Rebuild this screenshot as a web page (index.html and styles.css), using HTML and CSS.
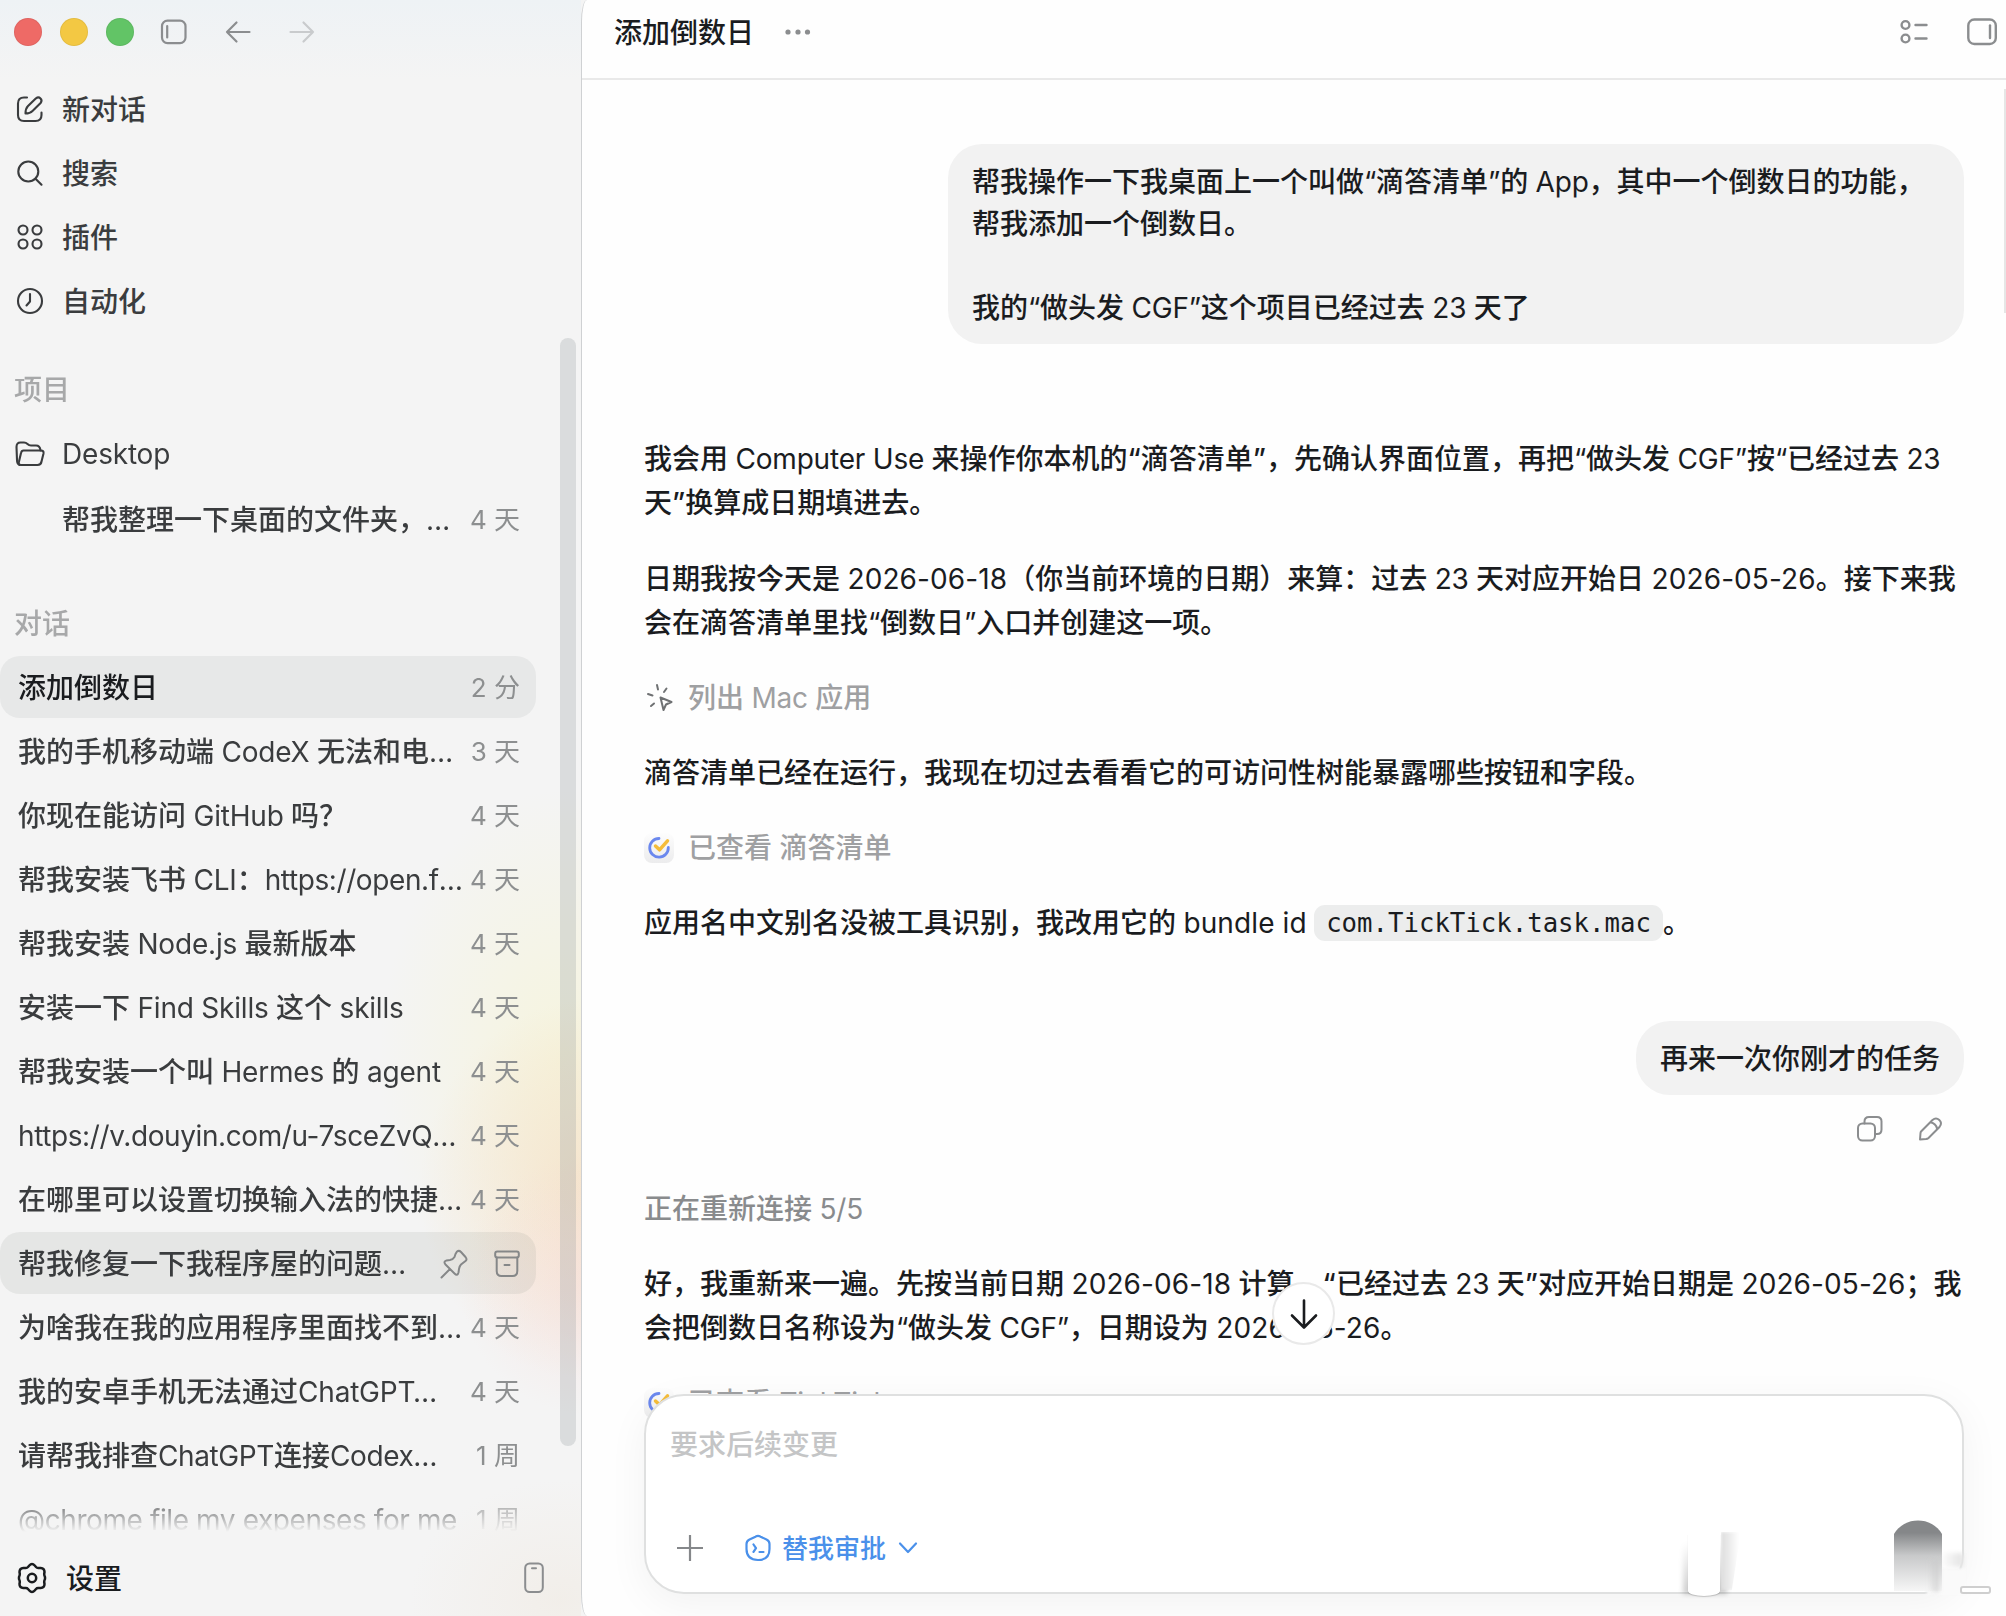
FILE: index.html
```html
<!DOCTYPE html>
<html lang="zh-CN">
<head>
<meta charset="utf-8">
<title>添加倒数日</title>
<link rel="stylesheet" href="styles.css">
</head>
<body>
<div class="app">
  <aside class="sidebar">
    <div class="titlebar">
      <span class="light red"></span><span class="light yellow"></span><span class="light green"></span>
      <svg class="tb-panel" width="28" height="28" viewBox="0 0 28 28"><rect x="2" y="2.6" width="23.5" height="22.5" rx="5.5"/><path d="M7.2 8v11.5"/></svg>
      <svg class="tb-back" width="26" height="26" viewBox="0 0 26 26"><path d="M24.5 13H2M11.500 3.500L2 13l9.500 9.500"/></svg>
      <svg class="tb-fwd" width="26" height="26" viewBox="0 0 26 26"><path d="M1.500 13H24M14.500 3.500L24 13l-9.500 9.500"/></svg>
    </div>
    <nav class="nav">
      <a class="nav-item"><svg width="28" height="28" viewBox="0 0 28 28"><path d="M11 2.500H8Q2 2.500 2 8.500V20Q2 26 8 26H19.500Q25.500 26 25.500 20V17.500"/><path d="M9.500 18.500Q9.500 13.500 12 11L20 3.300Q22.500 1.500 24.500 3.500T24.600 8L16.500 16Q14 18.500 9.500 18.500z"/></svg><span>新对话</span></a>
      <a class="nav-item"><svg width="28" height="28" viewBox="0 0 28 28"><circle cx="12.300" cy="12.500" r="10"/><path d="M19.500 19.700l6 6"/></svg><span>搜索</span></a>
      <a class="nav-item"><svg width="28" height="28" viewBox="0 0 28 28"><circle cx="7" cy="7" r="4.500"/><circle cx="21" cy="7" r="4.500"/><circle cx="7" cy="21" r="4.500"/><circle cx="21" cy="21" r="4.500"/></svg><span>插件</span></a>
      <a class="nav-item"><svg width="28" height="28" viewBox="0 0 28 28"><circle cx="14" cy="14" r="12"/><path d="M14 7v7.500l-3.500 4"/></svg><span>自动化</span></a>
    </nav>
    <div class="scroll">
      <h2 class="group">项目</h2>
      <a class="nav-item folder"><svg width="30" height="28" viewBox="0 0 30 28"><path d="M4.500 25Q2 24 2 20L1.500 7Q1.500 2.500 5.500 2.500H9Q11 2.500 12.500 4T16 5.500H21Q25 5.500 25.500 10.500"/><path d="M8.500 10.500H26Q29 10.500 28.500 13.500L26.500 21.500Q26 25 22.500 25H6Q3 25 4 21.500L6 13Q6.500 10.500 8.500 10.500z"/></svg><b>Desktop</b></a>
      <div class="row sub"><span class="name">帮我整理一下桌面的文件夹，<i>…</i></span><time>4 天</time></div>
      <h2 class="group second">对话</h2>
      <div class="row on"><span class="name">添加倒数日</span><time>2 分</time></div>
      <div class="row"><span class="name">我的手机移动端 <b>CodeX</b> 无法和电<i>…</i></span><time>3 天</time></div>
      <div class="row"><span class="name">你现在能访问 <b>GitHub</b> 吗？</span><time>4 天</time></div>
      <div class="row"><span class="name">帮我安装飞书 <b>CLI</b>：<b class="tight">https://open.f</b><i>…</i></span><time>4 天</time></div>
      <div class="row"><span class="name">帮我安装 <b>Node.js</b> 最新版本</span><time>4 天</time></div>
      <div class="row"><span class="name">安装一下 <b>Find Skills</b> 这个 <b>skills</b></span><time>4 天</time></div>
      <div class="row"><span class="name">帮我安装一个叫 <b>Hermes</b> 的 <b>agent</b></span><time>4 天</time></div>
      <div class="row"><span class="name"><b class="tight">https://v.douyin.com/u-7sceZvQ</b><i>…</i></span><time>4 天</time></div>
      <div class="row"><span class="name">在哪里可以设置切换输入法的快捷<i>…</i></span><time>4 天</time></div>
      <div class="row hover"><span class="name">帮我修复一下我程序屋的问题<i>…</i></span>
        <span class="row-tools">
          <svg width="28" height="30" viewBox="0 0 28 30"><path d="M10 20L1.500 28.500M17 2.500Q19 1 21 3L25.500 8Q27.500 10.500 25.500 12L21 15.500Q19.500 17 19 20L18.500 23.500Q17.500 27.500 14.500 24.500L5.500 15.500Q3 12.500 6.500 11.500L10 11Q13 10.500 14.500 8L15.500 5z"/></svg>
          <svg width="26" height="28" viewBox="0 0 26 28"><rect x="1.200" y="1.500" width="23.600" height="6" rx="2"/><path d="M2.700 7.500V21Q2.700 26 7.500 26H18.500Q23.300 26 23.300 21V7.500M10.500 15h5"/></svg>
        </span></div>
      <div class="row"><span class="name">为啥我在我的应用程序里面找不到<i>…</i></span><time>4 天</time></div>
      <div class="row"><span class="name">我的安卓手机无法通过<b>ChatGPT…</b></span><time>4 天</time></div>
      <div class="row"><span class="name">请帮我排查<b class="tight">ChatGPT</b>连接<b class="tight">Codex</b><i>…</i></span><time>1 周</time></div>
      <div class="row"><span class="name"><b class="tight">@chrome file my expenses for me</b></span><time>1 周</time></div>
    </div>
    <div class="settings">
      <svg width="30" height="32" viewBox="0 0 30 32"><path d="M12.300 3.500Q15 .5 17.700 3.500L19 5Q20 6.200 21.600 6L23.700 5.900Q27.500 6.200 27.500 10L27.200 12Q27.200 13.500 28 15V17Q27.200 18.500 27.200 20L27.500 22Q27.500 25.800 23.700 26.100L21.600 26Q20 25.800 19 27L17.700 28.500Q15 31.500 12.300 28.500L11 27Q10 25.800 8.400 26L6.300 26.100Q2.500 25.800 2.500 22L2.800 20Q2.800 18.500 2 17V15Q2.800 13.500 2.800 12L2.500 10Q2.500 6.200 6.300 5.900L8.400 6Q10 6.200 11 5z"/><circle cx="15" cy="16" r="4.200"/></svg>
      <span>设置</span>
      <svg class="phone" width="20" height="32" viewBox="0 0 20 32"><rect x="1.200" y="1.500" width="17.600" height="28.500" rx="4.500"/><path d="M8 6.300h4"/></svg>
    </div>
    <span class="thumb"></span>
  </aside>

  <main class="main">
    <header class="header">
      <h1>添加倒数日</h1>
      <svg class="more" width="26" height="8" viewBox="0 0 26 8"><circle cx="3" cy="4" r="2.600"/><circle cx="13" cy="4" r="2.600"/><circle cx="22.500" cy="4" r="2.600"/></svg>
      <svg class="list" width="28" height="26" viewBox="0 0 28 26"><circle cx="5.500" cy="6" r="3.900"/><circle cx="5.500" cy="19.500" r="3.900"/><path d="M15.500 6h11M15.500 19.500h11"/></svg>
      <svg class="pane" width="32" height="28" viewBox="0 0 32 28"><rect x="2.300" y="1.500" width="27.500" height="24.500" rx="6"/><path d="M24 7.500v12.500"/></svg>
    </header>
    <section class="thread">
      <div class="bubble first">帮我操作一下我桌面上一个叫做<i class="q">“</i>滴答清单<i class="q">”</i>的 <b>App</b>，其中一个倒数日的功能，<br>帮我添加一个倒数日。<br><br>我的<i class="q">“</i>做头发 <b>CGF</b><i class="q">”</i>这个项目已经过去 <b>23</b> 天了</div>
      <p class="intro">我会用 <b>Computer Use</b> 来操作你本机的“滴答清单”，先确认界面位置，再把<i class="q">“</i>做头发 <b>CGF</b><i class="q">”</i>按<i class="q">“</i>已经过去 <b>23</b><br>天”换算成日期填进去。</p>
      <p>日期我按今天是 <b class="num">2026-06-18</b>（你当前环境的日期）来算：过去 <b>23</b> 天对应开始日 <b class="num">2026-05-26</b>。接下来我<br>会在滴答清单里找<i class="q">“</i>倒数日<i class="q">”</i>入口并创建这一项。</p>
      <div class="tool">
        <svg class="click" width="30" height="30" viewBox="0 0 30 30"><path d="M12 3l1 4.500M21.500 6.500l-2.500 3.500M3 12l4.500 1.500M6 24l3-2.500M15.500 15.500l11 4.500-5.500 2.500-2.500 5.500z"/></svg>
        <span>列出 <b>Mac</b> 应用</span></div>
      <p>滴答清单已经在运行，我现在切过去看看它的可访问性树能暴露哪些按钮和字段。</p>
      <div class="tool"><span class="tick"><svg width="30" height="30" viewBox="0 0 30 30"><path class="ring" d="M15 5.500A9.300 9.300 0 1 0 24.300 14.500"/><path class="check" d="M11.500 13l4 3.800 8-9"/></svg></span><span>已查看 滴答清单</span></div>
      <p>应用名中文别名没被工具识别，我改用它的 <b class="num">bundle id</b> <code>com.TickTick.task.mac</code>。</p>
      <div class="bubble second">再来一次你刚才的任务</div>
      <div class="actions">
        <svg width="28" height="28" viewBox="0 0 28 28"><rect x="2" y="8.500" width="17" height="17" rx="4.500"/><path d="M8.500 8.500V6.500Q8.500 2 13 2H21Q25.500 2 25.500 6.500V14.500Q25.500 19 21 19H19"/></svg>
        <svg width="28" height="28" viewBox="0 0 28 28"><path d="M4 24.500L4.500 18Q4.600 17 5.300 16.300L16.500 5Q20 2 23.300 5T23.500 12L12.500 23Q11.500 23.900 10 24.100zM14.500 7.300Q20 8.500 21 13.500"/></svg>
      </div>
      <div class="status">正在重新连接 <b>5/5</b></div>
      <p>好，我重新来一遍。先按当前日期 <b class="num">2026-06-18</b> 计算，“已经过去 <b>23</b> 天”对应开始日期是 <b class="num">2026-05-26</b>；我<br>会把倒数日名称设为<i class="q">“</i>做头发 <b>CGF</b><i class="q">”</i>，日期设为 <b class="num">2026-05-26</b>。</p>
      <div class="tool"><span class="tick"><svg width="30" height="30" viewBox="0 0 30 30"><path class="ring" d="M15 5.500A9.300 9.300 0 1 0 24.300 14.500"/><path class="check" d="M11.500 13l4 3.800 8-9"/></svg></span><span>已查看 <b>TickTick</b></span></div>
    </section>
    <button class="jump"><svg width="30" height="32" viewBox="0 0 30 32"><path d="M15 2.500V29M3 17.500L15 29.500 27 17.500"/></svg></button>
    <section class="composer">
      <div class="placeholder">要求后续变更</div>
      <div class="bar">
        <svg class="plus" width="26" height="26" viewBox="0 0 26 26"><path d="M13 .5v25M.5 13h25"/></svg>
        <svg class="shield" width="26" height="28" viewBox="0 0 26 28"><path d="M10.500 2.700Q13 1 15.500 2.700L21.500 5.500Q24.500 7 24.500 10V15Q24.500 26 13 26T1.500 15V10Q1.500 7 4.500 5.500z"/><path d="M8.500 10.500l2.500 3.700-2.500 3.700M14.500 18h4"/></svg>
        <span>替我审批</span>
        <svg class="chev" width="20" height="14" viewBox="0 0 20 14"><path d="M2 2.500l8 8.500 8-8.500"/></svg>
      </div>
    </section>
    <span class="smear-shade"></span><span class="smear-left"></span><span class="smear-right"></span><span class="corner"></span><span class="smear-edge"></span>
    <span class="send"></span><span class="streak"></span><span class="dash"></span>
    <span class="main-thumb"></span>
  </main>
</div>
</body>
</html>
```
FILE: styles.css
```css
* { box-sizing: border-box; }
html, body { margin: 0; height: 100%; overflow: hidden; }
body {
  font-family: Inter, "Noto Sans CJK SC", sans-serif;
  font-size: 28px; font-weight: 500; line-height: 44px; color: #1a1c1f; background: #f4f4f4;
  text-spacing-trim: space-all; white-space: nowrap;
}
h1, h2, p { margin: 0; font-size: 28px; font-weight: 500; }
b { font-weight: 400; letter-spacing: -.2px; }
b.num { letter-spacing: .1px; }
b.tight { letter-spacing: -.4px; }
i { font-style: normal; font-weight: 400; letter-spacing: -2px; }
i.q { letter-spacing: -.3px; }
svg { fill: none; stroke: currentColor; stroke-width: 2; stroke-linecap: round; stroke-linejoin: round; flex: none; display: block; }
.app { display: flex; height: 1616px; width: 2006px; background: #f4f4f4; }

.sidebar {
  position: relative; width: 581px; flex: none; display: flex; flex-direction: column; color: #3a3c3e;
  background:
    radial-gradient(ellipse 130px 130px at 590px 1285px, rgba(248,215,212,.45), transparent),
    radial-gradient(ellipse 170px 190px at 590px 1190px, rgba(246,218,186,.6), transparent),
    radial-gradient(ellipse 180px 270px at 560px 1060px, rgba(246,244,218,.85), transparent),
    radial-gradient(ellipse 150px 120px at 560px 1600px, rgba(240,234,226,.6), transparent),
    linear-gradient(#eef2f5, #f4f4f4 80px);
}
.titlebar { display: flex; align-items: center; height: 64px; padding-left: 14px; color: #8b8d8f; }
.light { width: 28px; height: 28px; border-radius: 50%; margin-right: 18px; border: 1px solid rgba(0,0,0,.06); }
.red { background: #ee6a66; } .yellow { background: #f3c843; } .green { background: #62c466; }
.titlebar svg { stroke-width: 2.200; }
.tb-panel { margin-left: 8px; }
.tb-back { margin-left: 37px; }
.tb-fwd { margin-left: 38px; color: #c9cbcd; }
.nav { padding-top: 13px; }
.nav-item { display: flex; align-items: center; height: 64px; padding-left: 16px; gap: 18px; }
.nav-item svg { stroke-width: 2.100; }
.nav-item span { padding-top: 2px; }
.scroll {
  height: 1199px; overflow: hidden; padding-top: 25px; width: 536px;
  -webkit-mask-image: linear-gradient(#000 1158px, transparent 1199px);
  mask-image: linear-gradient(#000 1158px, transparent 1199px);
}
.group { height: 64px; line-height: 65px; padding-left: 14px; color: #a7a8a9; }
.group.second { margin-top: 41px; }
.folder { padding-left: 15px; gap: 17px; padding-bottom: 1px; }
.row { display: flex; align-items: center; justify-content: space-between; height: 62px; margin-bottom: 2px; padding: 1px 16px 0 18px; border-radius: 20px; }
.row.sub { padding-left: 62px; margin-top: 3px; padding-top: 0; }
.row time { color: #8d8f90; font-size: 26px; font-weight: 400; }
.row.on { background: #e7e8e8; color: #1a1c1f; }
.row.hover { background: rgba(130,138,134,.13); }
.row-tools { display: flex; align-items: center; gap: 26px; color: #858788; }
.settings { display: flex; align-items: center; height: 60px; margin-top: 16px; padding: 0 37px 0 17px; color: #1a1c1f; }
.settings svg { stroke-width: 2.500; }
.settings span { margin-left: 19px; padding-top: 1px; }
.settings .phone { margin-left: auto; color: #8b8d8f; stroke-width: 2; }
.thumb { position: absolute; left: 560px; top: 338px; width: 16px; height: 1108px; border-radius: 8px; background: rgba(140,146,152,.25); }

.main { position: relative; flex: 1; min-width: 0; background: #fefefe; border-left: 1px solid #cfd1d3; border-radius: 6px 0 0 6px / 22px 0 0 22px; overflow: hidden; }
.header { display: flex; align-items: center; height: 80px; padding: 1px 8px 15px 32px; border-bottom: 2px solid #e9e9e9; color: #8b8d8f; }
.header h1 { color: #1a1c1f; padding-top: 1px; }
.header svg { stroke-width: 2.400; }
.header .more { margin-left: 31px; fill: currentColor; stroke: none; }
.header .list { margin-left: auto; }
.header .pane { margin-left: 38px; }
.thread { display: flex; flex-direction: column; align-items: flex-start; gap: 31px; padding: 64px 42px 0 62px; height: 1536px; overflow: hidden; }
.bubble { align-self: flex-end; background: #f2f2f2; border-radius: 34px; padding: 17px 24px 15px; line-height: 42px; }
.bubble.first { width: 1016px; }
.intro { margin: 62px 0 1px; }
.tool { display: flex; align-items: center; height: 44px; color: #9fa0a2; }
.tool svg { margin-right: 14px; }
.tool .click { color: #6f7173; position: relative; left: 1px; top: -1px; }
.tick { width: 30px; height: 30px; margin-right: 14px; border-radius: 8px; background: linear-gradient(#fdfdfd, #ececed); }
.tick .ring { stroke: #6b88ee; stroke-width: 2.800; }
.tick .check { stroke: #f5bd3a; stroke-width: 3.500; }
code { font-family: "DejaVu Sans Mono", monospace; font-weight: 400; font-size: 25.700px; background: #eceded; border-radius: 11px; padding: 3px 12px; position: relative; top: -1px; }
.bubble.second { margin-top: 44px; }
.actions { align-self: flex-end; display: flex; gap: 32px; margin: -11px 20px 0 0; color: #8b8d8f; height: 28px; }
.status { margin-top: 13px; color: #898b8d; }
.jump { position: absolute; left: 690px; top: 1282px; width: 63px; height: 63px; border-radius: 50%; border: 2px solid #e9e9e9; background: #fff; padding: 0; display: grid; place-items: center; color: #1a1c1f; }
.jump svg { stroke-width: 2.600; }
.composer { position: absolute; left: 62px; top: 1394px; width: 1320px; height: 200px; border: 2px solid #dfe0e0; border-radius: 40px; background: #fff; box-shadow: 0 10px 40px rgba(0,0,0,.05); padding: 27px 24px; }
.placeholder { color: #c4c5c6; }
.bar { display: flex; align-items: center; height: 44px; margin-top: 59px; padding-left: 7px; color: #4a90ea; font-size: 26px; }
.bar svg { stroke-width: 2.200; }
.plus { color: #85878a; }
.shield { margin-left: 42px; }
.bar span { margin-left: 11px; padding-top: 1px; }
.chev { margin-left: 12px; }
.smear-shade { position: absolute; left: 1101px; top: 1542px; width: 44px; height: 52px; background: linear-gradient(transparent, rgba(0,0,0,.2)); filter: blur(2.500px); }
.smear-left { position: absolute; left: 1106px; top: 1534px; width: 32px; height: 62px; background: #fff; border-radius: 0 0 16px 16px / 0 0 5px 5px; box-shadow: 0 1px 1px rgba(0,0,0,.18); }
.smear-right { position: absolute; left: 1139px; top: 1532px; width: 18px; height: 58px; background: linear-gradient(90deg, #dcdcdc, #ededed 50%, #fff); filter: blur(1.500px); clip-path: polygon(0 0, 110% 0, 60% 100%, 0 100%); }
.corner { position: absolute; left: 1345px; top: 1568px; width: 39px; height: 27px; background: #fafafa; filter: blur(1px); }
.smear-edge { position: absolute; left: 1361px; top: 1553px; width: 20px; height: 14px; background: linear-gradient(90deg, #fafafa, #e4e4e4); filter: blur(2px); }
.send { position: absolute; left: 1312px; top: 1520px; width: 48px; height: 71px; clip-path: path("M0 14A28 28 0 0 1 48 14V71H0z"); background: linear-gradient(#858789 0 18%, #c8c9ca 50%, #f6f6f6); }
.streak { position: absolute; left: 1346px; top: 1560px; width: 11px; height: 32px; background: linear-gradient(90deg, transparent, #c8c8c8); filter: blur(2px); opacity: .7; }
.dash { position: absolute; left: 1378px; top: 1586px; width: 31px; height: 8px; background: #fff; border: 2px solid #cfcfcf; border-radius: 3px; filter: blur(.6px); }
.main-thumb { position: absolute; right: 0; top: 89px; width: 2px; height: 224px; background: #e6e6e6; }
```
